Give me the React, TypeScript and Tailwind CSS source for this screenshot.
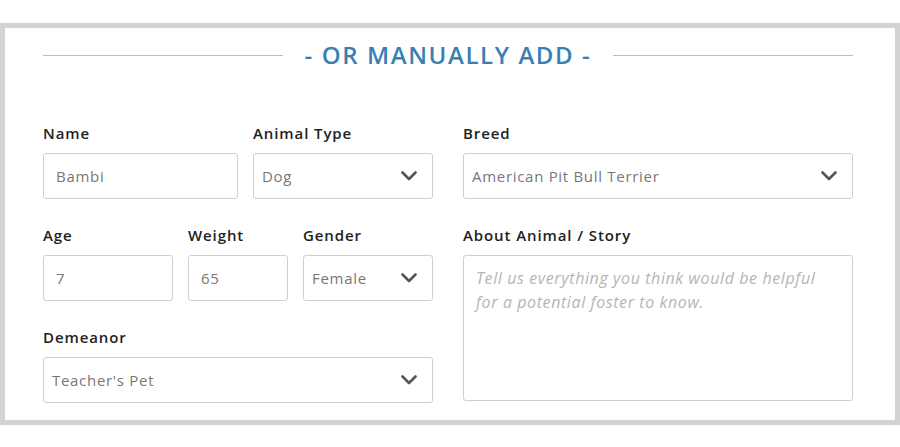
const font = { fontFamily: "'Open Sans', 'Noto Sans', sans-serif" };

function Label({ children }: { children: React.ReactNode }) {
  return (
    <div className="mb-[9px] h-[22px] text-[15px] font-semibold leading-[22px] tracking-[0.9px] text-[#222]">
      {children}
    </div>
  );
}

function Chevron() {
  return (
    <svg width="16" height="10" viewBox="0 0 16 10" fill="none" className="shrink-0">
      <polyline points="1.5,1.5 8,8 14.5,1.5" stroke="#555" strokeWidth="2.6" strokeLinecap="round" strokeLinejoin="round" />
    </svg>
  );
}

function TextBox({ value }: { value: string }) {
  return (
    <div className="flex h-[46px] items-center rounded-[3px] border border-[#cfcfcf] bg-white px-3 text-[15px] tracking-[0.7px] text-[#777]">
      {value}
    </div>
  );
}

function SelectBox({ value }: { value: string }) {
  return (
    <div className="flex h-[46px] items-center justify-between rounded-[3px] border border-[#cfcfcf] bg-white pl-[8px] pr-[15px] text-[15px] tracking-[0.7px] text-[#777]">
      <span>{value}</span>
      <Chevron />
    </div>
  );
}

export default function App() {
  return (
    <div className="h-[447px] bg-white pt-[23px]" style={font}>
      <div className="border-[5px] border-[#d3d3d3] pb-[17px] pl-[38px] pr-[42px] pt-[11px]">
        <div className="flex items-center gap-[22px]">
          <div className="h-px flex-1 bg-[#bdbdbd]" />
          <h2 className="text-[24px] font-semibold leading-[32px] tracking-[1.6px] text-[#3a7fb3]">- OR MANUALLY ADD -</h2>
          <div className="h-px flex-1 bg-[#bdbdbd]" />
        </div>

        <div className="mt-[51px] grid grid-cols-2 gap-x-[30px]">
          <div className="flex flex-col gap-[25px]">
            <div className="flex gap-[15px]">
              <div className="w-[195px]">
                <Label>Name</Label>
                <TextBox value="Bambi" />
              </div>
              <div className="flex-1">
                <Label>Animal Type</Label>
                <SelectBox value="Dog" />
              </div>
            </div>
            <div className="flex gap-[15px]">
              <div className="w-[130px]">
                <Label>Age</Label>
                <TextBox value="7" />
              </div>
              <div className="w-[100px]">
                <Label>Weight</Label>
                <TextBox value="65" />
              </div>
              <div className="flex-1">
                <Label>Gender</Label>
                <SelectBox value="Female" />
              </div>
            </div>
            <div>
              <Label>Demeanor</Label>
              <SelectBox value="Teacher's Pet" />
            </div>
          </div>

          <div className="flex flex-col gap-[25px]">
            <div>
              <Label>Breed</Label>
              <SelectBox value="American Pit Bull Terrier" />
            </div>
            <div>
              <Label>About Animal / Story</Label>
              <div className="h-[146px] rounded-[3px] border border-[#cfcfcf] bg-white pl-3 pr-5 pt-[10px] text-[16px] italic leading-[24px] tracking-[0.6px] text-[#b5b5b5]">
                Tell us everything you think would be helpful for a potential foster to know.
              </div>
            </div>
          </div>
        </div>
      </div>
    </div>
  );
}
